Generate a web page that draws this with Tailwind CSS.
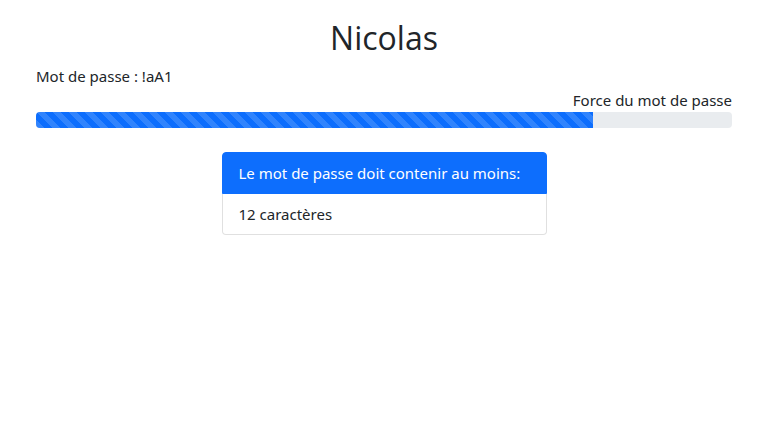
<!DOCTYPE html>
<html lang="fr">
<head>
<meta charset="utf-8">
<meta name="viewport" content="width=device-width, initial-scale=1">
<title>Nicolas</title>
<script src="https://cdn.jsdelivr.net/npm/@tailwindcss/browser@4"></script>
</head>
<body class="bg-white font-['Noto_Sans','Open_Sans',sans-serif] text-[15px] leading-6 text-[#212529]">
<main class="px-9 pt-4">
  <h1 class="mb-1 text-center font-['Open_Sans','Noto_Sans',sans-serif] text-[32px] leading-[44px]">Nicolas</h1>
  <p>Mot de passe : !aA1</p>
  <p id="force" class="text-right">Force du mot de passe</p>
  <div role="progressbar" aria-labelledby="force" aria-valuenow="80" aria-valuemin="0" aria-valuemax="100" class="h-4 overflow-hidden rounded bg-[#e9ecef]">
    <div class="h-full bg-[#0d6efd] bg-[linear-gradient(45deg,rgba(255,255,255,.15)_25%,transparent_25%,transparent_50%,rgba(255,255,255,.15)_50%,rgba(255,255,255,.15)_75%,transparent_75%,transparent)] bg-[length:16px_16px]" style="width:80%"></div>
  </div>
  <ul class="mx-auto mt-6 max-w-[325px]">
    <li class="rounded-t border border-[#0d6efd] bg-[#0d6efd] px-4 py-2 text-white">Le mot de passe doit contenir au moins:</li>
    <li class="rounded-b border border-t-0 border-black/12 px-4 py-2">12 caractères</li>
  </ul>
</main>
</body>
</html>
